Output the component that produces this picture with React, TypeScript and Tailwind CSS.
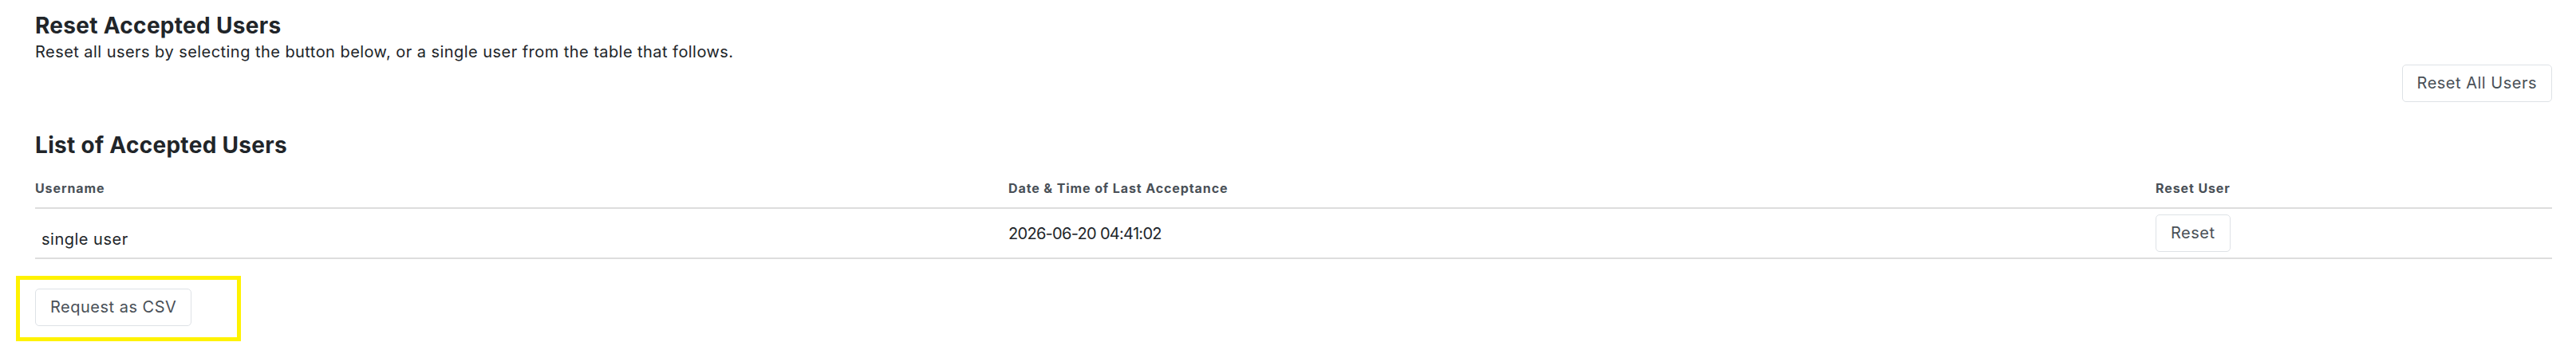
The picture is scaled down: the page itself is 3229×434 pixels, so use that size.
import React from 'react';

const users = [{ name: 'single user', last: '2026-06-20 04:41:02' }];

const btn =
  'rounded-[5px] border border-[#dee2e6] bg-white px-[18px] py-2 text-[20px] leading-[29px] tracking-[0.5px] text-[#495057]';

const App: React.FC = () => {
  return (
    <div className="relative min-h-[434px] bg-white pl-[44px] pr-[30px] pt-4 font-['Inter',sans-serif] text-[#212529]">
      {/* reset all */}
      <h2 className="text-[28px] font-bold leading-[1.2] tracking-[0.3px]">Reset Accepted Users</h2>
      <p className="text-[20px] leading-[30px] tracking-[0.45px]">
        Reset all users by selecting the button below, or a single user from the table that follows.
      </p>
      <div className="mt-px flex justify-end">
        <button className={btn}>Reset All Users</button>
      </div>

      {/* table */}
      <h2 className="mt-[38px] text-[28px] font-bold leading-[1.2] tracking-[0.3px]">List of Accepted Users</h2>
      <div className="mt-[13px]">
        <div className="grid grid-cols-[1220px_1438px_1fr] border-b-2 border-[#dddddd] pb-3 pt-3 text-[16px] font-bold leading-6 tracking-[0.9px] text-[#495057]">
          <div>Username</div>
          <div>Date &amp; Time of Last Acceptance</div>
          <div>Reset User</div>
        </div>
        {users.map((u) => (
          <div
            key={u.name}
            className="grid h-[63px] grid-cols-[1220px_1438px_1fr] border-b-2 border-[#dddddd] text-[20px] leading-[30px] tracking-[0.5px]"
          >
            <div className="pl-2 pt-[23px]">{u.name}</div>
            <div className="pt-4 tracking-[-0.7px]">{u.last}</div>
            <div className="pt-[7px]">
              <button className={btn}>Reset</button>
            </div>
          </div>
        ))}
      </div>

      <div className="mt-[37px]">
        <button className={btn}>Request as CSV</button>
      </div>

      {/* highlight annotation */}
      <div className="pointer-events-none absolute left-[20px] top-[346px] h-[82px] w-[282px] border-[5px] border-[#fff200]" />
    </div>
  );
};

export default App;
